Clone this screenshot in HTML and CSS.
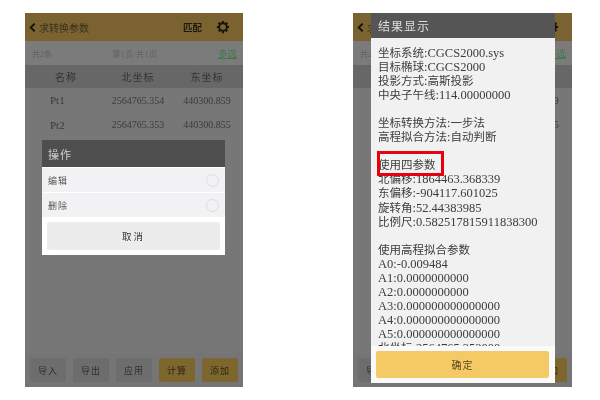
FILE: index.html
```html
<!DOCTYPE html>
<html lang="zh">
<head>
<meta charset="utf-8">
<title>求转换参数</title>
<link rel="stylesheet" href="styles.css">
</head>
<body>
<main class="stage">
  <section class="phone phone-left">
    <header class="topbar">
      <svg class="back" viewBox="0 0 8 12"><path d="M6.5 1.5 2 6l4.5 4.5" fill="none" stroke="#15130c" stroke-width="2.2"/></svg>
      <span class="title">求转换参数</span>
      <span class="match">匹配</span>
      <svg class="gear" viewBox="0 0 24 24"><circle cx="12" cy="12" r="6.6" fill="none" stroke="#17150e" stroke-width="3.4"/><path d="M12 1.5v5M12 17.5v5M1.5 12h5M17.5 12h5M4.6 4.6l3.5 3.5M15.9 15.9l3.5 3.5M4.6 19.4l3.5-3.5M15.9 8.1l3.5-3.5" stroke="#17150e" stroke-width="3.6"/></svg>
    </header>
    <div class="subbar"><span>共2条</span><span class="page">第1页/共1页</span><span class="multi">多选</span></div>
    <div class="thead"><span>名称</span><span>北坐标</span><span>东坐标</span></div>
    <div class="row"><span class="name">Pt1</span><span>2564765.354</span><span>440300.859</span></div>
    <div class="row"><span class="name">Pt2</span><span>2564765.353</span><span>440300.855</span></div>
    <footer class="actions">
      <span class="act">导入</span><span class="act">导出</span><span class="act">应用</span><span class="act gold">计算</span><span class="act gold">添加</span>
    </footer>
    <div class="sheet">
      <div class="sheet-title">操作</div>
      <div class="option"><span>编辑</span><i class="radio"></i></div>
      <div class="option"><span>删除</span><i class="radio"></i></div>
      <div class="cancel">取消</div>
    </div>
  </section>

  <section class="phone phone-right">
    <header class="topbar">
      <svg class="back" viewBox="0 0 8 12"><path d="M6.5 1.5 2 6l4.5 4.5" fill="none" stroke="#15130c" stroke-width="2.2"/></svg>
      <span class="title">求转换参数</span>
      <span class="match">匹配</span>
      <svg class="gear" viewBox="0 0 24 24"><circle cx="12" cy="12" r="6.6" fill="none" stroke="#17150e" stroke-width="3.4"/><path d="M12 1.5v5M12 17.5v5M1.5 12h5M17.5 12h5M4.6 4.6l3.5 3.5M15.9 15.9l3.5 3.5M4.6 19.4l3.5-3.5M15.9 8.1l3.5-3.5" stroke="#17150e" stroke-width="3.6"/></svg>
    </header>
    <div class="subbar"><span>共2条</span><span class="page">第1页/共1页</span><span class="multi">多选</span></div>
    <div class="thead"><span>名称</span><span>北坐标</span><span>东坐标</span></div>
    <div class="row"><span class="name">Pt1</span><span>2564765.354</span><span>440300.859</span></div>
    <div class="row"><span class="name">Pt2</span><span>2564765.353</span><span>440300.855</span></div>
    <footer class="actions">
      <span class="act">导入</span><span class="act">导出</span><span class="act">应用</span><span class="act gold">计算</span><span class="act gold">添加</span>
    </footer>
    <div class="result">
      <div class="result-title">结果显示</div>
      <div class="result-body">
        <p><span class="cn">坐标系统</span>:CGCS2000.sys</p>
        <p><span class="cn">目标椭球</span>:CGCS2000</p>
        <p><span class="cn">投影方式</span>:<span class="cn">高斯投影</span></p>
        <p><span class="cn">中央子午线</span>:114.00000000</p>
        <p class="gap"><span class="cn">坐标转换方法</span>:<span class="cn">一步法</span></p>
        <p><span class="cn">高程拟合方法</span>:<span class="cn">自动判断</span></p>
        <p class="gap"><span class="cn">使用四参数</span></p>
        <p><span class="cn">北偏移</span>:1864463.368339</p>
        <p><span class="cn">东偏移</span>:-904117.601025</p>
        <p><span class="cn">旋转角</span>:52.44383985</p>
        <p><span class="cn">比例尺</span>:0.582517815911838300</p>
        <p class="gap"><span class="cn">使用高程拟合参数</span></p>
        <p>A0:-0.009484</p>
        <p>A1:0.0000000000</p>
        <p>A2:0.0000000000</p>
        <p>A3:0.000000000000000</p>
        <p>A4:0.000000000000000</p>
        <p>A5:0.000000000000000</p>
        <p><span class="cn">北坐标</span>:2564765.353000</p>
      </div>
      <div class="result-foot"><div class="confirm">确定</div></div>
    </div>
    <div class="highlight"></div>
  </section>
</main>
</body>
</html>
```
FILE: styles.css
```css
* { box-sizing: border-box; }
html, body { margin: 0; background: #fff; }
body { width: 600px; height: 400px; overflow: hidden; font-family: "Liberation Serif", "Noto Sans CJK SC", serif; }
.stage { display: flex; gap: 110px; padding: 13px 0 0 25px; }
.phone { position: relative; height: 374px; background: #777; display: flex; flex-direction: column; overflow: hidden; }
.phone > *:not(.highlight) { filter: blur(0.35px); }
.phone-left { width: 218px; }
.phone-right { width: 219px; }
.topbar { height: 28px; flex: none; background: #7a6330; display: flex; align-items: center; padding: 0 13px 0 4px; color: #2b2410; }
.back { width: 7px; height: 11px; margin-right: 3px; }
.title { font-size: 10px; color: #3a3018; }
.match { margin-left: auto; font-size: 9.5px; font-weight: 700; color: #1f1a0d; }
.gear { width: 14px; height: 14px; margin-left: 14px; }
.subbar { height: 24px; flex: none; display: flex; align-items: center; justify-content: space-between; padding: 0 6px 0 7px; font-size: 8px; color: #5f5f5f; background: #7b7b7b; }
.page { letter-spacing: 0.4px; }
.multi { font-size: 9.5px; color: #3f7a45; text-decoration: underline; }
.thead, .row { display: grid; grid-template-columns: 78px 70px 68px; align-items: center; text-align: center; }
.thead { height: 23px; flex: none; background: #676767; font-size: 10px; letter-spacing: 1px; color: #333; }
.thead span:first-child { padding-left: 4px; }
.row { height: 24.5px; flex: none; font-size: 10px; color: #3a3a3a; }
.row .name { font-size: 11px; text-align: left; padding-left: 25px; }
.actions { margin-top: auto; height: 34px; display: flex; gap: 7px; align-items: center; padding: 0 5px; background: #757575; }
.act { flex: 1; height: 24px; border-radius: 2px; background: #6d6d6d; display: flex; align-items: center; justify-content: center; font-size: 9px; letter-spacing: 1px; color: #2e2e2e; }
.act.gold { background: #7d672f; color: #2d2510; }
.sheet { position: absolute; left: 17px; top: 127px; width: 183px; height: 115px; background: #fff; }
.sheet-title { height: 27px; background: #4e4e4e; color: #d2d2d2; font-size: 11px; letter-spacing: 1px; display: flex; align-items: center; padding-left: 6px; margin-bottom: 1px; }
.option { height: 25px; background: #f2f2f4; border-bottom: 1px solid #fff; display: flex; align-items: center; justify-content: space-between; padding: 0 6px; font-size: 9px; letter-spacing: 1px; color: #555; }
.radio { width: 13px; height: 13px; border: 1px solid #ddd; border-radius: 50%; }
.cancel { margin: 4px 5px 0; height: 28px; background: #ececec; border-radius: 2px; display: flex; align-items: center; justify-content: center; font-size: 9.5px; letter-spacing: 2px; color: #333; }
.result { position: absolute; left: 18px; top: 0; width: 184px; height: 370px; display: flex; flex-direction: column; background: #f1f1f1; }
.result-title { height: 25px; flex: none; background: #555; color: #ddd; font-size: 12px; letter-spacing: 1px; display: flex; align-items: center; padding-left: 7px; }
.result-body { flex: 1; min-height: 0; overflow: hidden; padding: 8px 0 0 7px; font-size: 12.5px; line-height: 14.05px; color: #3c3c3c; }
.result-body p { margin: 0; white-space: nowrap; }
.result-body .gap { margin-top: 14.05px; }
.cn { font-size: 11.5px; line-height: 1; }
.result-foot { height: 37px; flex: none; background: #fafafa; padding: 5px 6px 5px 5px; }
.confirm { height: 27px; background: #f5c964; border-radius: 2px; display: flex; align-items: center; justify-content: center; font-size: 10px; letter-spacing: 1px; color: #5a4620; }
.highlight { position: absolute; left: 24px; top: 138px; width: 67px; height: 25px; border: 3px solid #e60012; }
```
